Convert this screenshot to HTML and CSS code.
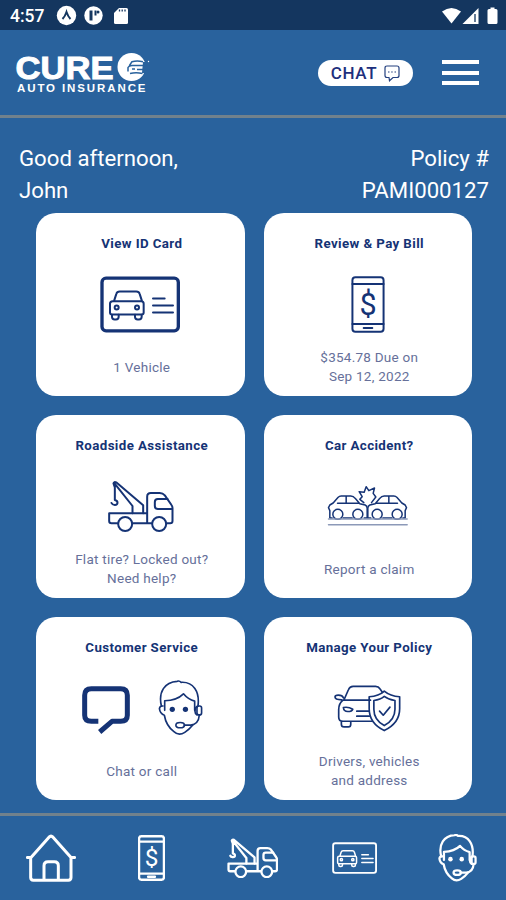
FILE: index.html
```html
<!DOCTYPE html>
<html lang="en">
<head>
    <meta charset="UTF-8">
    <meta name="viewport" content="width=device-width, initial-scale=1.0">
    <title>CURE Auto Insurance</title>
    <link rel="stylesheet" href="styles.css">
</head>
<body>
    <!-- Icons shared by the cards and the bottom nav -->
    <svg class="sprite">
        <symbol id="icon-id" viewBox="0 0 240 170">
            <rect class="frame" x="6" y="6" width="229" height="158" rx="12"/>
            <path d="M42 75l7-22q2-7 10-7h50q8 0 10 7l7 22M38 75h86q7 0 7 8v26q0 6-6 6H36q-6 0-6-6V83q0-8 8-8z"/>
            <path d="M36 116v6q0 8 8 8h4q8 0 8-8v-6M105 116v6q0 8 8 8h4q8 0 8-8v-6M159 67h35M159 88h60M159 109h60"/>
            <circle cx="50" cy="94" r="6"/>
            <circle cx="111" cy="94" r="6"/>
        </symbol>
        <symbol id="icon-pay" viewBox="0 0 102 172">
            <rect x="4" y="4" width="94" height="164" rx="9"/>
            <path d="M4 24h94M4 145h94M38 157h26"/>
            <text class="dollar" x="51" y="117" text-anchor="middle">$</text>
        </symbol>
        <symbol id="icon-tow" viewBox="0 0 200 156">
            <path d="M31 130H13q-7 0-7-7v-23h114v30H77M120 130V50q0-11 11-11h27q9 0 15 7l20 29q3 4 3 9v39q0 7-7 7h-9M133 130h-13"/>
            <path d="M193 87h-41q-9 0-9-9V66q0-9 9-9h29"/>
            <path d="M76 100V78L22 10M108 100V76L27 7q-6-3-8 3l4 12v38M23 60q8 2 8 8 0 6-8 7-8-1-10-6"/>
            <circle cx="54" cy="132" r="21"/>
            <circle cx="156" cy="132" r="21"/>
        </symbol>
        <symbol id="icon-crash" viewBox="0 0 242 126">
            <path d="M15 99H8V77l-4-9 4-8 10-6 15-17q3-4 9-4h29q8 0 13 7l14 16 16 4q6 3 6 10v29h-9M48 99h27M31 55h65M57 34v21"/>
            <path d="M227 99h7V77l4-9-4-8-10-6-15-17q-3-4-9-4h-29q-8 0-13 7l-14 16-16 4q-6 3-6 10v29h9M194 99h-27M211 55h-65M185 34v21"/>
            <path d="M110 53L98 43l7-8-9-15 15 2 6-17 8 12 17-8-4 16 8 11-13 17"/>
            <circle cx="32" cy="88" r="15"/>
            <circle cx="92" cy="88" r="15"/>
            <circle cx="150" cy="88" r="15"/>
            <circle cx="210" cy="88" r="15"/>
            <path class="road" d="M4 102h236M4 119h236"/>
        </symbol>
        <symbol id="icon-bubble" viewBox="0 0 144 150">
            <path class="bubble" d="M49 106H28Q8 106 8 88V28Q8 8 28 8h88q20 0 20 20v60q0 18-20 18H90L53 138"/>
        </symbol>
        <symbol id="icon-agent" viewBox="0 0 136 170">
            <path d="M10 79C0 36 20 6 58 4q6-3 12 3c37-2 57 28 51 72M20 92V63q37-1 57-21 14 17 34 22v28"/>
            <path d="M15 79q-10-1-11 8 2 16 15 20 5 31 29 50 15 14 33 2 14-9 25-23"/>
            <rect x="118" y="79" width="14" height="27" rx="6"/>
            <path d="M118 80q-7 5-6 15 0 8 6 11M125 107q-2 27-26 30H79"/>
            <ellipse cx="67" cy="137" rx="13" ry="8"/>
            <circle class="dot" cx="43" cy="89" r="8"/>
            <circle class="dot" cx="83" cy="89" r="8"/>
        </symbol>
        <symbol id="icon-policy" viewBox="0 0 200 140">
            <path d="M30 44L43 14q4-10 14-10h67q9 0 13 7l8 11M27 45h82M27 45q-13 10-13 28v22q0 13 13 13h87M28 38q-3-8-15-8-10 0-10 6 0 8 20 8M22 109v8q0 8 8 8h13q7 0 7-8v-8M68 78h37M68 93h37"/>
            <path d="M28 67q15-3 28 5-2 7-15 7-12 0-13-12z"/>
            <path d="M150 18q18 15 46 17v36c0 31-17 51-46 65-29-14-45-34-45-65V35q29-2 45-17z"/>
            <path d="M150 34q13 10 32 12v26c0 24-12 38-32 49-20-11-31-25-31-49V46q20-2 31-12zM136 78l11 12 20-24"/>
        </symbol>
        <symbol id="icon-home" viewBox="0 0 150 143">
            <path d="M14 69v61q0 8 8 8h105q8 0 8-8V69M4 70h11L69 9q6-6 12 0l54 61h11M54 137V95q0-12 12-12h19q12 0 12 12v42"/>
        </symbol>
    </svg>

    <div class="status-bar">
        <span class="clock">4:57</span>
        <svg class="status-left" viewBox="0 0 76 22">
            <circle cx="10.500" cy="10.500" r="9.700"/>
            <path class="mark" d="M6.500 14Q9 11.500 10.500 7 12 11.500 14.500 14"/>
            <circle cx="37.500" cy="10.500" r="9.200"/>
            <path class="mark thick" d="M35 5.500v10"/>
            <path class="mark" d="M39.500 5.500v5"/>
            <circle class="mark-dot" cx="42" cy="7" r="1.500"/>
            <path d="M63 3h7.500Q72 3 72 4.500v13q0 1.500-1.500 1.500h-11q-1.500 0-1.500-1.500V8z"/>
            <path class="notch" d="M63.500 4.500v2M66.200 4.500v2M69 4.500v2"/>
        </svg>
        <svg class="status-right" viewBox="0 0 58 22">
            <path d="M1 6.500Q10.500-.5 20 6.500L10.500 18.500z"/>
            <path d="M37.500 3v16H21.500z"/>
            <path class="notch" d="M34 9v8"/>
            <path d="M49.500 2.500h4v1.500h1.500q1.500 0 1.500 1.500v12q0 1.500-1.500 1.500h-7q-1.500 0-1.500-1.500v-12Q46.500 4 48 4h1.500z"/>
        </svg>
    </div>

    <header>
        <svg class="logo" viewBox="0 0 136 42">
            <text class="logo-name" x="-.5" y="26.500" textLength="98" lengthAdjust="spacingAndGlyphs">CURE</text>
            <text class="logo-sub" x="1" y="40" textLength="128.500">AUTO INSURANCE</text>
            <circle cx="115.500" cy="15" r="14"/>
            <path class="logo-gap" d="M127 10h6v11h-7z"/>
            <path class="logo-car" d="M113.500 13.500l2.500-3.800q5-1.500 11 0M112 19.500v-4q1-2 4-2h12M116 17h3M121 17.500h7M114 21.500q6-1.500 12.500 0"/>
            <circle cx="132.500" cy="9.500" r=".7"/>
        </svg>
        <div class="header-right">
            <button class="chat-btn">CHAT
                <svg class="chat-icon" viewBox="0 0 16 17">
                    <path d="M5 12.500H3q-2 0-2-2V3q0-2 2-2h10q2 0 2 2v7.500q0 2-2 2H9L5.500 15.800z"/>
                    <path d="M4 7h1.500M7.200 7h1.500M10.500 7H12"/>
                </svg>
            </button>
            <button class="menu-btn"><span></span><span></span><span></span></button>
        </div>
    </header>

    <main>
        <div class="greeting">
            <p>Good afternoon,<br>John</p>
            <p class="policy">Policy #<br>PAMI000127</p>
        </div>

        <div class="cards">
            <div class="card">
                <h2>View ID Card</h2>
                <div class="card-icon"><svg class="id"><use href="#icon-id"/></svg></div>
                <p>1 Vehicle</p>
            </div>
            <div class="card">
                <h2>Review &amp; Pay Bill</h2>
                <div class="card-icon"><svg class="pay"><use href="#icon-pay"/></svg></div>
                <p>$354.78 Due on<br>Sep 12, 2022</p>
            </div>
            <div class="card">
                <h2>Roadside Assistance</h2>
                <div class="card-icon"><svg class="tow"><use href="#icon-tow"/></svg></div>
                <p>Flat tire? Locked out?<br>Need help?</p>
            </div>
            <div class="card">
                <h2>Car Accident?</h2>
                <div class="card-icon"><svg class="crash"><use href="#icon-crash"/></svg></div>
                <p>Report a claim</p>
            </div>
            <div class="card">
                <h2>Customer Service</h2>
                <div class="card-icon service">
                    <svg class="bubble-icon"><use href="#icon-bubble"/></svg>
                    <svg class="agent"><use href="#icon-agent"/></svg>
                </div>
                <p>Chat or call</p>
            </div>
            <div class="card">
                <h2>Manage Your Policy</h2>
                <div class="card-icon"><svg class="policy-icon"><use href="#icon-policy"/></svg></div>
                <p>Drivers, vehicles<br>and address</p>
            </div>
        </div>
    </main>

    <nav>
        <a><svg class="nav-home"><use href="#icon-home"/></svg></a>
        <a><svg class="nav-pay"><use href="#icon-pay"/></svg></a>
        <a><svg class="nav-tow"><use href="#icon-tow"/></svg></a>
        <a><svg class="nav-id"><use href="#icon-id"/></svg></a>
        <a><svg class="nav-agent"><use href="#icon-agent"/></svg></a>
    </nav>
</body>
</html>
```
FILE: styles.css
```css
* {
    box-sizing: border-box;
}

body {
    margin: 0;
    height: 900px;
    display: flex;
    flex-direction: column;
    overflow: hidden;
    font-family: Roboto, sans-serif;
    background: #29629d;
    color: white;
}

h2, p {
    margin: 0;
}

button {
    border: none;
    padding: 0;
    font-family: inherit;
    cursor: pointer;
}

.sprite {
    display: none;
}

/* Status bar */
.status-bar {
    height: 30px;
    flex: none;
    display: flex;
    align-items: center;
    padding: 1px 7px 0 10px;
    background: #14365f;
}

.clock {
    width: 46px;
    font-size: 17.500px;
    font-weight: 500;
}

.status-bar svg {
    height: 22px;
    fill: white;
}

.status-left {
    width: 76px;
}

.status-right {
    width: 58px;
    margin-left: auto;
}

.status-bar .mark {
    fill: none;
    stroke: #14365f;
    stroke-width: 2;
}

.status-bar .thick {
    stroke-width: 3;
}

.status-bar .mark-dot {
    fill: #14365f;
}

.status-bar .notch {
    fill: none;
    stroke: #14365f;
    stroke-width: 1.3;
}

/* Header */
header {
    height: 88px;
    flex: none;
    display: flex;
    justify-content: space-between;
    align-items: center;
    padding: 0 27px 0 16px;
    border-bottom: 3px solid #71818c;
}

.logo {
    width: 136px;
    height: 42px;
    fill: white;
    overflow: visible;
}

.logo-name {
    font: bold 32px "Liberation Sans", sans-serif;
    stroke: white;
    stroke-width: 1;
}

.logo-sub {
    font: bold 11.5px "Liberation Sans", sans-serif;
}

.logo-gap {
    fill: #29629d;
}

.logo-car {
    fill: none;
    stroke: #29629d;
    stroke-width: 1.5;
}

.header-right {
    display: flex;
    align-items: center;
    gap: 29px;
}

.chat-btn {
    width: 95px;
    height: 26px;
    display: flex;
    justify-content: center;
    align-items: center;
    gap: 7px;
    border-radius: 13px;
    background: white;
    color: #1d2f7c;
    font-size: 17px;
    font-weight: 500;
    letter-spacing: 0.7px;
}

.chat-icon {
    width: 16px;
    height: 17px;
    margin-top: 1px;
    fill: none;
    stroke: #24407f;
    stroke-width: 1.2;
}

.menu-btn {
    width: 37px;
    display: flex;
    flex-direction: column;
    gap: 6.500px;
    background: none;
}

.menu-btn span {
    height: 4px;
    background: white;
}

/* Greeting */
main {
    flex: 1;
}

.greeting {
    display: flex;
    justify-content: space-between;
    padding: 24px 17px 0 19px;
    font-size: 22.200px;
    line-height: 32px;
}

.policy {
    text-align: right;
}

/* Cards */
.cards {
    display: grid;
    grid-template-columns: 1fr 1fr;
    grid-auto-rows: 183px;
    gap: 19px;
    padding: 7px 34px 0 36px;
}

.card {
    display: flex;
    flex-direction: column;
    align-items: center;
    padding: 21px 0 10px;
    border-radius: 20px;
    background: white;
    color: #153375;
    text-align: center;
}

.card h2 {
    padding-left: 3px;
    font-size: 13.300px;
    font-weight: 700;
    line-height: 20px;
    letter-spacing: 0.4px;
}

.card p {
    height: 38px;
    display: flex;
    align-items: center;
    padding-left: 3px;
    font-size: 13.500px;
    line-height: 19px;
    letter-spacing: 0.25px;
    color: #66709a;
}

.card-icon {
    flex: 1;
    display: flex;
    justify-content: center;
    align-items: center;
    gap: 28px;
    padding-top: 6px;
}

.service {
    padding-left: 5px;
}

.card-icon svg, nav svg {
    display: block;
    fill: none;
    stroke: currentColor;
    stroke-width: 6;
    stroke-linejoin: round;
    stroke-linecap: round;
}

.frame {
    stroke-width: 10;
}

.bubble {
    stroke-width: 15;
    stroke-linecap: butt;
}

.dot {
    fill: currentColor;
    stroke: none;
}

.dollar {
    font-family: Roboto, sans-serif;
    font-size: 92px;
    fill: currentColor;
    stroke: none;
}

.road {
    stroke: #8c99b8;
}

.id {
    width: 80px;
    height: 57px;
}

.pay {
    width: 34px;
    height: 57px;
}

.tow {
    width: 67px;
    height: 52px;
}

.card-icon .crash {
    width: 81px;
    height: 42px;
    stroke-width: 4.500;
}

.bubble-icon {
    width: 48px;
    height: 50px;
    margin-top: 5px;
}

.card-icon .agent {
    width: 45px;
    height: 56px;
    stroke-width: 5;
}

.card-icon .policy-icon {
    width: 67px;
    height: 47px;
    stroke-width: 5;
}

/* Bottom nav */
nav {
    height: 87px;
    flex: none;
    display: grid;
    grid-template-columns: repeat(5, 1fr);
    place-items: center;
    border-top: 3px solid #71818c;
}

nav svg {
    stroke-width: 9;
}

.nav-home {
    width: 50px;
    height: 48px;
}

.nav-pay {
    width: 27px;
    height: 46px;
}

.nav-tow {
    width: 51px;
    height: 40px;
}

nav .nav-id {
    width: 45px;
    height: 32px;
    stroke-width: 8;
}

.nav-id .frame {
    stroke-width: 11;
}

nav .nav-agent {
    width: 39px;
    height: 48px;
    margin-left: 4px;
    stroke-width: 8;
}
```
